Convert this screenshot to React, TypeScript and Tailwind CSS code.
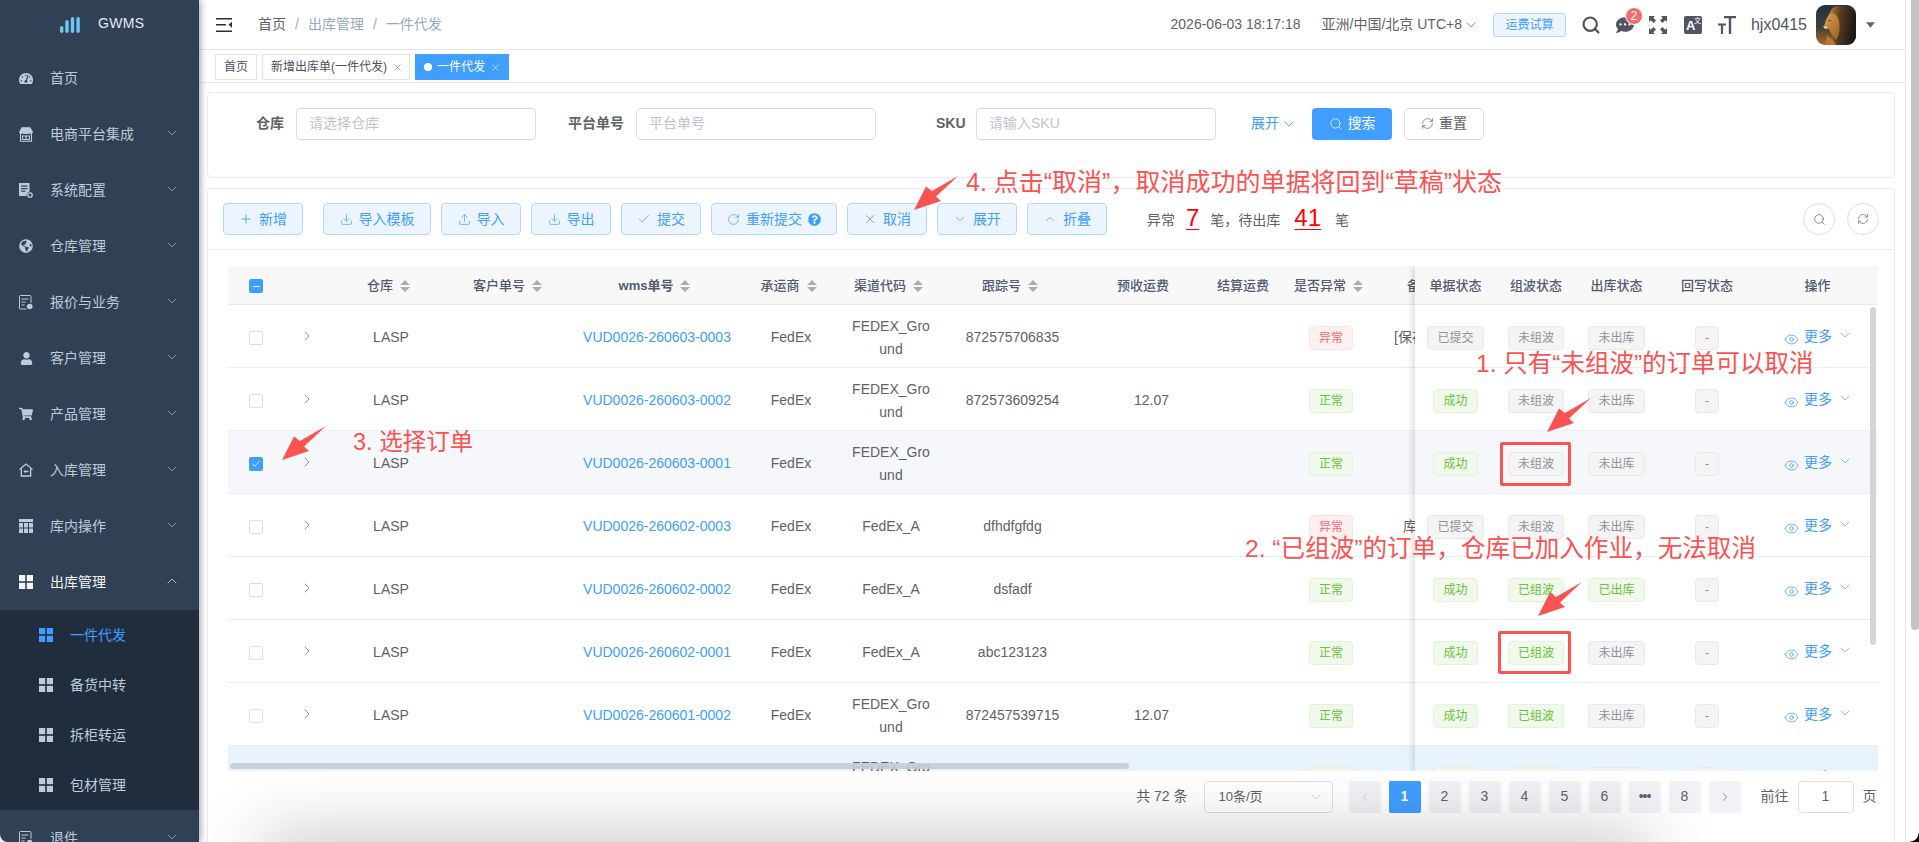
import {
  Check,
  ChevronDown,
  ChevronLeft,
  ChevronRight,
  ChevronUp,
  Download,
  Eye,
  Minus,
  Plus,
  RefreshCw,
  RotateCw,
  Search,
  Upload,
  X,
} from "lucide-react";
import {
  FaCommentDots,
  FaGlobeAmericas,
  FaQuestionCircle,
  FaShoppingCart,
  FaTachometerAlt,
  FaUser,
} from "react-icons/fa";

const fontStack = "font-['Liberation_Sans','Noto_Sans_CJK_SC',sans-serif]";

// ---- small drawn icons ----
const GridIcon = ({ className = "" }: { className?: string }) => (
  <svg viewBox="0 0 14 14" className={className} fill="currentColor">
    <rect x="0" y="0" width="6.2" height="6.2" />
    <rect x="7.8" y="0" width="6.2" height="6.2" />
    <rect x="0" y="7.8" width="6.2" height="6.2" />
    <rect x="7.8" y="7.8" width="6.2" height="6.2" />
  </svg>
);

const StoreIcon = () => (
  <svg viewBox="0 0 14 15" className="w-[14px] h-[15px]" fill="none" stroke="currentColor" strokeWidth="1.1">
    <path d="M3 .8h8l2.3 4.2c0 2-3 2-3.2 0 0 2-3 2-3.1 0 0 2-3 2-3.1 0C3.700 7 .7 7 .7 5z" fill="currentColor" />
    <path d="M1.500 7v7.300h11V7" />
    <rect x="3.500" y="9" width="7" height="3.500" />
    <path d="M7 9v3.500" />
  </svg>
);

const DocGearIcon = () => (
  <svg viewBox="0 0 14 15" className="w-[14px] h-[15px]" fill="currentColor">
    <path d="M0 0h10.500v8.500a3.600 3.600 0 0 0-2.800 4.500H0z" />
    <rect x="2" y="2.500" width="6.500" height="1.200" fill="#304156" />
    <rect x="2" y="5" width="6.500" height="1.200" fill="#304156" />
    <rect x="2" y="7.500" width="4.500" height="1.200" fill="#304156" />
    <circle cx="11" cy="12" r="2.200" fill="none" stroke="currentColor" strokeWidth="1.300" />
  </svg>
);

const DocUserIcon = () => (
  <svg viewBox="0 0 14 15" className="w-[14px] h-[15px]" fill="none" stroke="currentColor" strokeWidth="1">
    <path d="M7.500 14H1.500a1 1 0 0 1-1-1V1.500a1 1 0 0 1 1-1h9.500a1 1 0 0 1 1 1V8" />
    <path d="M2.500 4h7M2.500 7h4M2.500 10h3" />
    <circle cx="10.700" cy="11.500" r="2.800" fill="currentColor" stroke="none" />
  </svg>
);

const HomeInIcon = () => (
  <svg viewBox="0 0 14 14" className="w-[14px] h-[14px]" fill="none" stroke="currentColor" strokeWidth="1.300">
    <path d="M.5 6.500 7 1l6.500 5.500" />
    <path d="M2.300 6v7h9.400V6" />
    <path d="M9.500 8.500H5.500" strokeWidth="1.400" />
    <path d="M6.500 6.800 4.500 8.500l2 1.700z" fill="currentColor" stroke="none" />
  </svg>
);

const TableIcon = () => (
  <svg viewBox="0 0 14 14" className="w-[14px] h-[14px]" fill="currentColor">
    <path d="M0 0h14v3H0z" />
    <path d="M0 4h4v4.500H0zM5 4h4v4.500H5zM10 4h4v4.500h-4zM0 9.500h4V14H0zM5 9.500h4V14H5zM10 9.500h4V14h-4z" />
  </svg>
);

const Hamburger = () => (
  <svg viewBox="0 0 16 14" className="w-[16px] h-[14px] ml-[17px]" fill="#2b2f36">
    <rect x="0" y="0" width="16" height="1.500" />
    <rect x="0" y="6" width="10" height="1.500" />
    <rect x="0" y="12.500" width="16" height="1.500" />
    <path d="M16 3.800v6l-3.500-3z" />
  </svg>
);

const Logo = () => (
  <svg viewBox="0 0 20 16" className="w-[20px] h-[16px] mt-[4px]" fill="#6cc8f0">
    <rect x="0" y="9" width="3.400" height="7" rx="1.700" />
    <rect x="5.300" y="3" width="3.400" height="13" rx="1.700" />
    <rect x="10.800" y="0" width="3.400" height="16" rx="1.700" />
    <rect x="16.400" y="0" width="3.400" height="16" rx="1.700" />
  </svg>
);

const FullscreenIcon = () => (
  <svg viewBox="0 0 18 18" className="w-[18px] h-[18px] ml-[15px]" fill="#50555f">
    <path d="M0 0h6L4.300 1.800 7 4.500 4.500 7 1.800 4.300 0 6zM18 0v6l-1.800-1.700L13.500 7 11 4.500l2.700-2.700L12 0zM0 18v-6l1.800 1.700L4.500 11 7 13.500l-2.700 2.700L6 18zM18 18h-6l1.700-1.800L11 13.500l2.500-2.500 2.700 2.700L18 12z" />
  </svg>
);

const TranslateIcon = () => (
  <div className="w-[18px] h-[18px] ml-[17px] rounded-[2px] bg-[#50555f] text-white relative">
    <span className="absolute left-[2px] top-[3px] text-[13px] leading-[14px] font-bold">A</span>
    <span className="absolute right-[1px] top-[1px] text-[7px] leading-[8px]">文</span>
  </div>
);

const FontSizeIcon = () => (
  <svg viewBox="0 0 18 18" className="w-[18px] h-[18px] ml-[16px]" fill="#50555f">
    <path d="M6 0h12v2.200h-4.800V18h-2.400V2.200H6zM0 7.500h8v2H5.100V18H2.900V9.500H0z" />
  </svg>
);

const Avatar = () => (
  <svg viewBox="0 0 40 40" className="w-[40px] h-[40px] rounded-[9px] ml-[9px] shrink-0">
    <defs>
      <linearGradient id="sky" x1="0" y1="0" x2="0" y2="1">
        <stop offset="0" stopColor="#26323f" />
        <stop offset="0.55" stopColor="#3e3f3a" />
        <stop offset="1" stopColor="#a86c28" />
      </linearGradient>
      <linearGradient id="mane" x1="0" y1="0" x2="1" y2="0.2">
        <stop offset="0" stopColor="#c08a3e" />
        <stop offset="0.45" stopColor="#5a3c20" />
        <stop offset="1" stopColor="#1c1815" />
      </linearGradient>
      <linearGradient id="face" x1="0" y1="0" x2="1" y2="1">
        <stop offset="0" stopColor="#d9a257" />
        <stop offset="1" stopColor="#9c5f20" />
      </linearGradient>
    </defs>
    <rect width="40" height="40" fill="url(#sky)" />
    <path d="M18 2C26-1 37 3 40 9v31H16c3-5 1-12-2-18C11 14 13 5 18 2z" fill="url(#mane)" />
    <path d="M15 8c4 0 7 3 8 8 1 7 1 13-3 19-3-4-6-8-7-11l-5-2.500 1-3.500c1-4 3-8 6-10z" fill="url(#face)" />
    <path d="M11 30c3 3 7 5 9 10H9z" fill="#b9772b" />
    <path d="M7 21l4 .5.500 2.500-3-.5z" fill="#efd3a4" />
    <path d="M12 15l3 .5-1 1z" fill="#2a1c10" />
  </svg>
);

const SortCaret = () => (
  <svg viewBox="0 0 10 12" className="w-[10px] h-[12px] shrink-0" fill="#a9adb5">
    <path d="M5 0l5 5H0zM0 7h10l-5 5z" />
  </svg>
);

const CheckBox = ({ state }: { state?: "on" | "part" }) => {
  if (state === "on") {
    return (
      <span className="w-[14px] h-[14px] rounded-[2px] bg-[#409eff] flex items-center justify-center text-white">
        <Check size={10} strokeWidth={2} />
      </span>
    );
  }
  if (state === "part") {
    return (
      <span className="w-[14px] h-[14px] rounded-[2px] bg-[#409eff] flex items-center justify-center text-white">
        <Minus size={9} strokeWidth={3} />
      </span>
    );
  }
  return <span className="w-[14px] h-[14px] rounded-[2px] border border-[#dcdfe6] bg-white block" />;
};

// ---- sidebar ----
const menu = [
  { label: "首页", icon: <FaTachometerAlt size={15} /> },
  { label: "电商平台集成", icon: <StoreIcon />, arrow: true },
  { label: "系统配置", icon: <DocGearIcon />, arrow: true },
  { label: "仓库管理", icon: <FaGlobeAmericas size={14} />, arrow: true },
  { label: "报价与业务", icon: <DocUserIcon />, arrow: true },
  { label: "客户管理", icon: <FaUser size={13} />, arrow: true },
  { label: "产品管理", icon: <FaShoppingCart size={14} />, arrow: true },
  { label: "入库管理", icon: <HomeInIcon />, arrow: true },
  { label: "库内操作", icon: <TableIcon />, arrow: true },
];
const subMenu = ["一件代发", "备货中转", "拆柜转运", "包材管理"];

const MenuRow = ({ label, icon, arrow }: { label: string; icon: React.ReactNode; arrow?: boolean }) => (
  <div className="h-[56px] flex items-center pl-[19px] pr-[19px] text-[#bfcbd9] text-[14px]">
    <span className="w-[14px] flex justify-center shrink-0">{icon}</span>
    <span className="ml-[17px] flex-1">{label}</span>
    {arrow && <ChevronDown size={16} strokeWidth={1} className="text-[#bfcbd9] -mt-[2px]" />}
  </div>
);

const Sidebar = () => (
  <aside className="w-[199px] shrink-0 h-[842px] overflow-hidden bg-[#304156] shadow-[2px_0_6px_rgba(0,21,41,0.35)] z-10 rounded-bl-[8px]">
    <div className="h-[50px] flex items-center pl-[60px] pb-[4px]">
      <Logo />
      <span className="ml-[18px] text-[14px] text-[#e3e8ee] tracking-[0.3px]">GWMS</span>
    </div>
    {menu.map((item) => (
      <MenuRow key={item.label} {...item} />
    ))}
    <div className="h-[56px] flex items-center pl-[19px] pr-[19px] text-[#f4f4f5] text-[14px]">
      <GridIcon className="w-[14px] h-[14px] shrink-0" />
      <span className="ml-[17px] flex-1">出库管理</span>
      <ChevronUp size={16} strokeWidth={1} className="-mt-[2px]" />
    </div>
    <div className="bg-[#1f2d3d]">
      {subMenu.map((name, i) => (
        <div
          key={name}
          className={
            i === 0
              ? "h-[50px] flex items-center pl-[39px] text-[14px] text-[#409eff]"
              : "h-[50px] flex items-center pl-[39px] text-[14px] text-[#bfcbd9]"
          }
        >
          <GridIcon className="w-[14px] h-[14px] shrink-0" />
          <span className="ml-[17px]">{name}</span>
        </div>
      ))}
    </div>
    <MenuRow label="退件" icon={<DocUserIcon />} arrow />
  </aside>
);

// ---- header and tag strip ----
const Header = () => (
  <header className="h-[50px] shrink-0 border-b border-[#e4e5e7] flex items-center bg-white text-[14px]">
    <Hamburger />
    <nav className="ml-[26px] flex items-center text-[#97a8be]">
      <span className="text-[#606266]">首页</span>
      <span className="mx-[9px]">/</span>
      <span>出库管理</span>
      <span className="mx-[9px]">/</span>
      <span>一件代发</span>
    </nav>
    <span className="ml-auto text-[#606266]">2026-06-03 18:17:18</span>
    <span className="ml-[21px] text-[#606266]">亚洲/中国/北京 UTC+8</span>
    <ChevronDown size={16} strokeWidth={1} className="ml-[1px] text-[#606266]" />
    <button className="ml-[14px] w-[73px] h-[24px] rounded-[3px] border border-[#b3d8ff] bg-[#ecf5ff] text-[#409eff] text-[12px]">
      运费试算
    </button>
    <Search size={20} strokeWidth={2.6} className="ml-[15px] text-[#50555f]" />
    <div className="relative ml-[15px]">
      <FaCommentDots size={18} className="text-[#50555f]" />
      <span className="absolute left-[9px] top-[-9px] w-[18px] h-[18px] rounded-full bg-[#f56c6c] border border-white text-white text-[12px] leading-[16px] text-center">
        2
      </span>
    </div>
    <FullscreenIcon />
    <TranslateIcon />
    <FontSizeIcon />
    <span className="ml-[15px] text-[16px] text-[#50555f]">hjx0415</span>
    <Avatar />
    <svg viewBox="0 0 10 6" className="w-[9px] h-[6px] ml-[10px] mr-[30px]" fill="#60656f">
      <path d="M0 0h10L5 6z" />
    </svg>
  </header>
);

const TagStrip = () => (
  <div className="h-[33px] shrink-0 border-b border-[#e6e7ea] bg-white flex items-start pt-[4px] pl-[16px] gap-[5px] text-[12px] text-[#495060]">
    <span className="h-[26px] w-[42px] border border-[#e0e3e8] flex items-center justify-center">首页</span>
    <span className="h-[26px] w-[148px] border border-[#e0e3e8] flex items-center pl-[8px]">
      新增出库单(一件代发)
      <X size={11} strokeWidth={1.2} className="ml-[5px] text-[#606266]" />
    </span>
    <span className="h-[26px] w-[94px] bg-[#409eff] text-white flex items-center pl-[9px]">
      <span className="w-[8px] h-[8px] rounded-full bg-white mr-[5px]" />
      一件代发
      <X size={11} strokeWidth={1.2} className="ml-[5px]" />
    </span>
  </div>
);

// ---- search form ----
const Field = ({ label, holder, w, ml }: { label: string; holder: string; w: string; ml: string }) => (
  <div className={`flex items-center ${ml}`}>
    <span className={`${w} text-right text-[14px] font-bold text-[#606266] mr-[12px]`}>{label}</span>
    <div className="w-[240px] h-[32px] rounded-[4px] border border-[#dcdfe6] flex items-center pl-[12px] text-[14px] text-[#c0c4cc]">
      {holder}
    </div>
  </div>
);

const SearchCard = () => (
  <section className="ml-[8px] mr-[10px] mt-[8.500px] h-[86.200px] shrink-0 rounded-[4px] border border-[#e6ebf5] bg-white flex items-start pt-[15px] pl-[48px]">
    <Field label="仓库" holder="请选择仓库" w="w-[28px]" ml="" />
    <Field label="平台单号" holder="平台单号" w="w-[56px]" ml="ml-[32px]" />
    <Field label="SKU" holder="请输入SKU" w="w-[28px]" ml="ml-[60px]" />
    <span className="ml-[35px] h-[32px] flex items-center text-[14px] text-[#409eff]">
      展开
      <ChevronDown size={16} strokeWidth={1.2} className="ml-[2px]" />
    </span>
    <button className="ml-[15px] w-[80px] h-[32px] rounded-[4px] bg-[#409eff] text-white text-[14px] flex items-center justify-center gap-[5px]">
      <Search size={14} strokeWidth={1.3} />
      搜索
    </button>
    <button className="ml-[12px] w-[80px] h-[32px] rounded-[4px] border border-[#dcdfe6] text-[#606266] text-[14px] flex items-center justify-center gap-[5px]">
      <RefreshCw size={13} strokeWidth={1.3} />
      重置
    </button>
  </section>
);

// ---- toolbar ----
const tools = [
  { text: "新增", icon: <Plus size={14} strokeWidth={1.5} />, cls: "w-[80px]" },
  { text: "导入模板", icon: <Download size={13} strokeWidth={1.3} />, cls: "w-[108px] ml-[20px]" },
  { text: "导入", icon: <Upload size={13} strokeWidth={1.3} />, cls: "w-[80px] ml-[10px]" },
  { text: "导出", icon: <Download size={13} strokeWidth={1.3} />, cls: "w-[80px] ml-[10px]" },
  { text: "提交", icon: <Check size={14} strokeWidth={1.3} />, cls: "w-[80px] ml-[10px]" },
  { text: "重新提交", icon: <RotateCw size={13} strokeWidth={1.3} />, cls: "w-[126px] ml-[10px]", help: true },
  { text: "取消", icon: <X size={14} strokeWidth={1.3} />, cls: "w-[80px] ml-[10px]" },
  { text: "展开", icon: <ChevronDown size={14} strokeWidth={1.3} />, cls: "w-[80px] ml-[10px]" },
  { text: "折叠", icon: <ChevronUp size={14} strokeWidth={1.3} />, cls: "w-[80px] ml-[10px]" },
];

const Toolbar = () => (
  <div className="h-[61px] shrink-0 border-b border-[#e6ebf5] flex items-start pt-[14px] pl-[15px] pr-[15px]">
    {tools.map((t) => (
      <button
        key={t.text}
        className={`${t.cls} h-[32px] rounded-[4px] border border-[#b3d8ff] bg-[#ecf5ff] text-[#409eff] text-[14px] flex items-center justify-center gap-[6px]`}
      >
        {t.icon}
        {t.text}
        {t.help && <FaQuestionCircle size={13} className="text-[#409eff]" />}
      </button>
    ))}
    <div className="ml-[40px] h-[32px] flex items-center text-[14px] text-[#606266] pt-[3px]">
      异常
      <span className="mx-[11px] text-[24px] leading-[28px] text-[#ff0000] underline underline-offset-[3px] decoration-1 -mt-[6px]">7</span>
      笔，待出库
      <span className="mx-[14px] text-[24px] leading-[28px] text-[#ff0000] underline underline-offset-[3px] decoration-1 -mt-[6px]">41</span>
      笔
    </div>
    <div className="ml-auto flex gap-[12px]">
      <span className="w-[32px] h-[32px] rounded-full border border-[#dcdfe6] flex items-center justify-center text-[#606266]">
        <Search size={13} strokeWidth={1.3} />
      </span>
      <span className="w-[32px] h-[32px] rounded-full border border-[#dcdfe6] flex items-center justify-center text-[#606266]">
        <RefreshCw size={12} strokeWidth={1.3} />
      </span>
    </div>
  </div>
);

// ---- table ----
type Tone = "gray" | "green" | "red";
const toneCls: Record<Tone, string> = {
  gray: "bg-[#f4f4f5] border-[#e9e9eb] text-[#909399]",
  green: "bg-[#f0f9eb] border-[#e1f3d8] text-[#67c23a]",
  red: "bg-[#fef0f0] border-[#fde2e2] text-[#f56c6c]",
};

const Tag = ({ text, tone }: { text: string; tone: Tone }) => (
  <span className={`inline-flex items-center justify-center h-[24px] px-[9px] rounded-[4px] border text-[12px] ${toneCls[tone]}`}>
    {text}
  </span>
);

const rows = [
  { wms: "VUD0026-260603-0003", ch: "FEDEX_Ground", track: "872575706835", fee: "", abn: true, remark: "[保存失败", rcls: "pl-[11px]", doc: "已提交", wave: "未组波", out: "未出库" },
  { wms: "VUD0026-260603-0002", ch: "FEDEX_Ground", track: "872573609254", fee: "12.07", abn: false, remark: "", rcls: "", doc: "成功", wave: "未组波", out: "未出库" },
  { wms: "VUD0026-260603-0001", ch: "FEDEX_Ground", track: "", fee: "", abn: false, remark: "", rcls: "", doc: "成功", wave: "未组波", out: "未出库", checked: true },
  { wms: "VUD0026-260602-0003", ch: "FedEx_A", track: "dfhdfgfdg", fee: "", abn: true, remark: "库存不足", rcls: "pl-[20px]", doc: "已提交", wave: "未组波", out: "未出库" },
  { wms: "VUD0026-260602-0002", ch: "FedEx_A", track: "dsfadf", fee: "", abn: false, remark: "", rcls: "", doc: "成功", wave: "已组波", out: "已出库" },
  { wms: "VUD0026-260602-0001", ch: "FedEx_A", track: "abc123123", fee: "", abn: false, remark: "", rcls: "", doc: "成功", wave: "已组波", out: "未出库" },
  { wms: "VUD0026-260601-0002", ch: "FEDEX_Ground", track: "872457539715", fee: "12.07", abn: false, remark: "", rcls: "", doc: "成功", wave: "已组波", out: "未出库" },
  { wms: "VUD0026-260601-0001", ch: "FEDEX_Ground", track: "872457539700", fee: "", abn: false, remark: "", rcls: "", doc: "成功", wave: "已组波", out: "未出库", active: true },
];

const rowBg = (r: (typeof rows)[number]) => {
  if (r.checked) return "bg-[#f5f7fa]";
  if (r.active) return "bg-[#e8f3fe]";
  return "bg-white";
};

const HeadCell = ({ text, w, sort, right, bold }: { text: string; w: string; sort?: boolean; right?: boolean; bold?: boolean }) => (
  <div
    className={`${w} shrink-0 flex items-center gap-[7px] ${right ? "justify-end pr-[10px]" : "justify-center"} ${sort ? "pr-[5px]" : ""} ${bold ? "font-bold" : ""}`}
  >
    {text}
    {sort && <SortCaret />}
  </div>
);

const TableArea = () => (
  <div className="relative ml-[20px] mt-[15.500px] w-[1650px] h-[505px] overflow-hidden shrink-0 text-[14px] text-[#606266]">
    {/* head */}
    <div className="h-[39.500px] w-[1650px] flex pt-[2px] bg-[#f8f8f9] border-b border-[#e8eaec] text-[#515a6e] text-[13px] font-medium">
      <div className="w-[56px] shrink-0 flex items-center justify-center">
        <CheckBox state="part" />
      </div>
      <div className="w-[46px] shrink-0" />
      <HeadCell text="仓库" w="w-[122px]" sort />
      <HeadCell text="客户单号" w="w-[116px]" sort />
      <HeadCell text="wms单号" w="w-[178px]" sort bold />
      <HeadCell text="承运商" w="w-[90px]" sort />
      <HeadCell text="渠道代码" w="w-[110px]" sort />
      <HeadCell text="跟踪号" w="w-[133px]" sort />
      <HeadCell text="预收运费" w="w-[100px]" right />
      <HeadCell text="结算运费" w="w-[100px]" right />
      <HeadCell text="是否异常" w="w-[104px]" sort />
      <div className="flex-1 flex items-center pl-[24px]">备注</div>
    </div>
    {/* body */}
    {rows.map((r) => (
      <div key={r.wms} className={`h-[63px] w-[1650px] flex items-center pt-[3px] border-b border-[#ebeef5] ${rowBg(r)}`}>
        <div className="w-[56px] shrink-0 flex justify-center">
          <CheckBox state={r.checked ? "on" : undefined} />
        </div>
        <div className="w-[46px] shrink-0 flex justify-center -mt-[3px]">
          <ChevronRight size={16} strokeWidth={1} />
        </div>
        <div className="w-[122px] shrink-0 text-center">LASP</div>
        <div className="w-[116px] shrink-0" />
        <div className="w-[178px] shrink-0 text-center text-[#409eff] font-medium">{r.wms}</div>
        <div className="w-[90px] shrink-0 text-center">FedEx</div>
        <div className="w-[110px] shrink-0 text-center px-[13px] leading-[23px] break-all">{r.ch}</div>
        <div className="w-[133px] shrink-0 text-center">{r.track}</div>
        <div className="w-[100px] shrink-0 text-right pr-[10px]">{r.fee}</div>
        <div className="w-[100px] shrink-0" />
        <div className="w-[104px] shrink-0 text-center">
          <Tag text={r.abn ? "异常" : "正常"} tone={r.abn ? "red" : "green"} />
        </div>
        <div className={`flex-1 whitespace-nowrap ${r.rcls}`}>{r.remark}</div>
      </div>
    ))}
    {/* horizontal scrollbar lies over the rows */}
    <div className="absolute left-[2px] bottom-[2px] w-[899px] h-[6px] rounded-full bg-[#c6ccd6]/90" />
    {/* fixed right columns */}
    <div className="absolute right-0 top-0 w-[463px] h-full shadow-[-3px_0_6px_rgba(0,0,0,0.12)] bg-white">
      <div className="h-[39.500px] flex pt-[2px] bg-[#f8f8f9] border-b border-[#e8eaec] text-[#515a6e] text-[13px] font-medium">
        <HeadCell text="单据状态" w="w-[81px]" />
        <HeadCell text="组波状态" w="w-[80px]" />
        <HeadCell text="出库状态" w="w-[81px]" />
        <HeadCell text="回写状态" w="w-[100px]" />
        <HeadCell text="操作" w="w-[121px]" />
      </div>
      {rows.map((r) => (
        <div key={r.wms} className={`h-[63px] flex items-center pt-[3px] border-b border-[#ebeef5] ${rowBg(r)}`}>
          <div className="w-[81px] shrink-0 text-center">
            <Tag text={r.doc} tone={r.doc === "成功" ? "green" : "gray"} />
          </div>
          <div className="w-[80px] shrink-0 text-center">
            <Tag text={r.wave} tone={r.wave === "已组波" ? "green" : "gray"} />
          </div>
          <div className="w-[81px] shrink-0 text-center">
            <Tag text={r.out} tone={r.out === "已出库" ? "green" : "gray"} />
          </div>
          <div className="w-[100px] shrink-0 text-center">
            <Tag text="-" tone="gray" />
          </div>
          <div className="w-[121px] shrink-0 flex items-center pl-[27px] text-[#409eff]">
            <Eye size={15} strokeWidth={1.3} className="mt-[4px]" />
            <span className="ml-[5px] -mt-[3px]">更多</span>
            <ChevronDown size={16} strokeWidth={1} className="ml-[5px] -mt-[6px]" />
          </div>
        </div>
      ))}
      <div className="absolute right-[2px] top-[41px] w-[6px] h-[338px] rounded-full bg-[#cfd0d2]/90" />
    </div>
  </div>
);

const pageBtn = "w-[32px] h-[32px] rounded-[2px] bg-[#f0f2f5] flex items-center justify-center text-[14px] text-[#606266]";

const Pagination = () => (
  <div className="mt-[10px] pr-[17.500px] flex items-center justify-end h-[32px] shrink-0 text-[14px] text-[#606266]">
    <span>共 72 条</span>
    <div className="ml-[16px] w-[129px] h-[32px] rounded-[4px] border border-[#dcdfe6] flex items-center pl-[14px] pr-[8px]">
      <span className="flex-1 text-[13px]">10条/页</span>
      <ChevronDown size={16} strokeWidth={1} className="text-[#c0c4cc]" />
    </div>
    <span className={`${pageBtn} ml-[16px] text-[#c0c4cc]`}>
      <ChevronLeft size={14} strokeWidth={1.2} />
    </span>
    <span className="w-[32px] h-[32px] rounded-[2px] bg-[#409eff] text-white font-bold flex items-center justify-center ml-[8px]">1</span>
    {["2", "3", "4", "5", "6", "•••", "8"].map((p) => (
      <span key={p} className={`${pageBtn} ml-[8px] ${p === "•••" ? "text-[11px] tracking-[-1px]" : ""}`}>
        {p}
      </span>
    ))}
    <span className={`${pageBtn} ml-[8px]`}>
      <ChevronRight size={14} strokeWidth={1.2} />
    </span>
    <span className="ml-[20px]">前往</span>
    <div className="mx-[9px] w-[56px] h-[32px] rounded-[4px] border border-[#dcdfe6] flex items-center justify-center">1</div>
    <span>页</span>
  </div>
);

// ---- red annotations over the page ----
const Note = ({ pos, children }: { pos: string; children: React.ReactNode }) => (
  <div className={`absolute ${pos} z-30 leading-[32px] text-[#fb5252] whitespace-nowrap`}>
    {children}
  </div>
);

const Arrow = ({ pos }: { pos: string }) => (
  <svg viewBox="0 0 44 34" className={`absolute ${pos} z-30 w-[44px] h-[34px]`} fill="#fb5252">
    <path d="M0 34 12 10.500l6 4.500L44 0 22 20.500l5 4.500z" />
  </svg>
);

export default function App() {
  return (
    <div className={`relative w-[1919px] h-[842px] overflow-hidden flex bg-white ${fontStack}`}>
      <Sidebar />
      <main className="flex-1 min-w-0 flex">
        <div className="w-[1707px] flex flex-col h-[842px] overflow-hidden border-r border-[#e4e5e7]">
          <Header />
          <TagStrip />
          <SearchCard />
          <section className="ml-[8px] mr-[10px] mt-[10.600px] flex-1 rounded-t-[4px] border border-[#e6ebf5] border-b-0 flex flex-col overflow-hidden">
            <Toolbar />
            <TableArea />
            <Pagination />
          </section>
        </div>
        {/* page scrollbar */}
        <div className="flex-1 relative">
          <div className="absolute left-[5px] top-0 w-[8px] h-[630px] bg-[#c4c4c4] rounded-b-full" />
        </div>
      </main>

      {/* soft shadow from the window below, bottom edge of the capture */}
      <div className="absolute left-[262px] right-[269px] top-[842px] h-[40px] shadow-[0_0_70px_rgba(0,0,0,0.32)] z-20" />
      <div className="absolute right-0 bottom-0 w-[9px] h-[9px] bg-[radial-gradient(circle_at_top_left,transparent_8px,#000_9px)] z-40" />

      <Arrow pos="left-[913.500px] top-[175.500px]" />
      <Note pos="left-[966px] top-[166px] text-[25px]">4. 点击“取消”，取消成功的单据将回到“草稿”状态</Note>
      <Arrow pos="left-[282px] top-[426px]" />
      <Note pos="left-[353px] top-[426px] text-[23.500px]">3. 选择订单</Note>
      <Note pos="left-[1476px] top-[348px] text-[24.500px]">1. 只有“未组波”的订单可以取消</Note>
      <Arrow pos="left-[1546.500px] top-[398px]" />
      <div className="absolute left-[1500px] top-[442px] w-[71px] h-[44px] border-[3px] border-[#fb5252] rounded-[2px] z-30" />
      <Note pos="left-[1245px] top-[533px] text-[24.600px]">2. “已组波”的订单，仓库已加入作业，无法取消</Note>
      <Arrow pos="left-[1537.500px] top-[582px]" />
      <div className="absolute left-[1498px] top-[631px] w-[73px] h-[43px] border-[3px] border-[#fb5252] rounded-[2px] z-30" />
    </div>
  );
}
